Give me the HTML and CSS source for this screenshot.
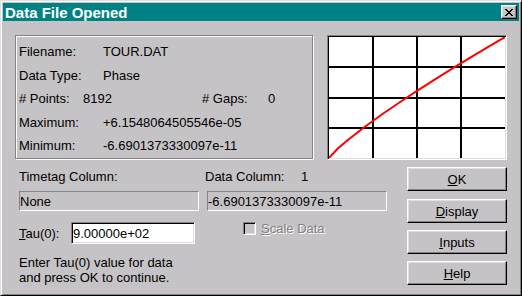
FILE: index.html
```html
<html>

<head>
	<link rel="stylesheet" href="styles.css">
</head>

<body>
	<div class="window">
		<div class="titlebar">
			<span class="title">Data File Opened</span>
			<span class="close-btn">
				<svg width="8" height="7" viewBox="0 0 8 7">
					<path d="M0 0h2v1H0z M6 0h2v1H6z M1 1h2v1H1z M5 1h2v1H5z M2 2h4v1H2z M3 3h2v1H3z M2 4h4v1H2z M1 5h2v1H1z M5 5h2v1H5z M0 6h2v1H0z M6 6h2v1H6z" fill="#000"/>
				</svg>
			</span>
		</div>
		<div class="main">
			<div class="top">
				<div class="info">
					<div><span class="lbl">Filename:</span>TOUR.DAT</div>
					<div><span class="lbl">Data Type:</span>Phase</div>
					<div><span class="lbl-short">#&nbsp;Points:</span><span class="points">8192</span><span class="gaps">#&nbsp;Gaps:</span>0</div>
					<div><span class="lbl">Maximum:</span>+6.1548064505546e-05</div>
					<div><span class="lbl">Minimum:</span>-6.6901373330097e-11</div>
				</div>
				<div class="graph">
					<svg width="176" height="121" viewBox="0 0 176 121" shape-rendering="crispEdges">
						<rect x="43" y="0" width="2" height="121" fill="#000"/>
						<rect x="87" y="0" width="2" height="121" fill="#000"/>
						<rect x="131" y="0" width="2" height="121" fill="#000"/>
						<rect x="0" y="29" width="176" height="2" fill="#000"/>
						<rect x="0" y="60" width="176" height="2" fill="#000"/>
						<rect x="0" y="90" width="176" height="2" fill="#000"/>
						<polyline fill="none" stroke="#ff0000" stroke-width="2" shape-rendering="auto"
							points="0,121 8.8,111.5 17.6,103.9 35.2,90.2 52.8,77.5 70.4,65.5 88,53.9 105.6,42.6 123.2,31.6 140.8,20.9 158.4,10.4 176,0"/>
					</svg>
				</div>
			</div>
			<div class="bottom">
				<div class="left">
					<div class="col-labels">
						<span class="col1">Timetag Column:</span>
						<span class="col2">Data Column:</span><span>1</span>
					</div>
					<div class="boxes">
						<div class="field">None</div>
						<div class="field">-6.6901373330097e-11</div>
					</div>
					<div class="tau-row">
						<label class="tau-label"><u>T</u>au(0):</label>
						<input class="tau-input" type="text" value="9.00000e+02">
						<span class="check-group">
							<span class="check"></span>
							<span class="disabled"><u>S</u>cale Data</span>
						</span>
					</div>
					<p class="help">Enter Tau(0) value for data<br>and press OK to continue.</p>
				</div>
				<div class="buttons">
					<button class="btn"><u>O</u>K</button>
					<button class="btn"><u>D</u>isplay</button>
					<button class="btn"><u>I</u>nputs</button>
					<button class="btn"><u>H</u>elp</button>
				</div>
			</div>
		</div>
	</div>
</body>

</html>
```

FILE: styles.css
```css
body {
	margin: 0;
	font-family: "Liberation Sans", Arial, sans-serif;
	font-size: 13px;
	color: #000;
}

.window {
	width: 522px;
	height: 296px;
	box-sizing: border-box;
	background-color: #c6c3c6;
	border: 1px solid;
	border-color: #dfdfdf #000 #000 #dfdfdf;
	box-shadow: inset 1px 1px #fff, inset -1px -1px #848284;
	padding: 2px;
	overflow: hidden;
}

.titlebar {
	height: 18px;
	background-color: #008284;
	display: flex;
	justify-content: space-between;
	padding: 0 2px 0 2px;
}

.title {
	color: #fff;
	font-weight: bold;
	font-size: 15px;
	line-height: 17px;
	padding-top: 1px;
}

.close-btn {
	align-self: center;
	width: 16px;
	height: 14px;
	box-sizing: border-box;
	background-color: #c6c3c6;
	border: 1px solid;
	border-color: #fff #000 #000 #fff;
	box-shadow: inset -1px -1px #848284, inset 1px 1px #dfdfdf;
	display: flex;
	align-items: center;
	justify-content: center;
}

.close-btn svg {
	display: block;
}

.main {
	padding: 14px 12px 0 12px;
}

.top {
	display: flex;
	align-items: flex-start;
	gap: 14px;
}

.info {
	width: 298px;
	height: 124px;
	box-sizing: border-box;
	border: 1px solid #848284;
	box-shadow: inset 1px 1px #fff, 1px 1px #fff;
	padding: 4px 3px 0 3px;
	line-height: 23.5px;
	white-space: nowrap;
}

.lbl {
	display: inline-block;
	width: 84px;
}

.lbl-short {
	display: inline-block;
	width: 64px;
}

.points {
	display: inline-block;
	width: 119px;
}

.gaps {
	display: inline-block;
	width: 66px;
}

.graph {
	background-color: #fff;
	border: 1px solid;
	border-color: #848284 #fff #fff #848284;
	box-shadow: inset 1px 1px #000, inset -1px -1px #dfdfdf;
	padding: 1px;
}

.graph svg {
	display: block;
}

.bottom {
	display: flex;
	padding-left: 4px;
}

.left {
	width: 388px;
}

.col-labels {
	margin-top: 9px;
	line-height: 15px;
	display: flex;
}

.col1 {
	width: 186px;
}

.col2 {
	width: 96px;
}

.boxes {
	margin-top: 7px;
	display: flex;
	gap: 8px;
}

.field {
	width: 180px;
	height: 20px;
	box-sizing: border-box;
	border: 1px solid;
	border-color: #848284 #fff #fff #848284;
	padding-top: 1px;
	line-height: 17px;
	white-space: nowrap;
}

.tau-row {
	margin-top: 11px;
	height: 22px;
	display: flex;
	align-items: center;
}

.tau-label {
	width: 52px;
	line-height: 15px;
}

.tau-input {
	width: 124px;
	height: 22px;
	box-sizing: border-box;
	margin: 0;
	padding: 0 1px;
	font-family: inherit;
	font-size: 13px;
	color: #000;
	background-color: #fff;
	border: 1px solid;
	border-color: #848284 #fff #fff #848284;
	box-shadow: inset 1px 1px #000, inset -1px -1px #dfdfdf;
	outline: none;
}

.check-group {
	margin-left: 48px;
	align-self: flex-start;
	margin-top: -1px;
	display: flex;
	align-items: center;
	line-height: 15px;
	gap: 5px;
}

.check {
	width: 13px;
	height: 13px;
	box-sizing: border-box;
	border: 1px solid;
	border-color: #848284 #fff #fff #848284;
	box-shadow: inset 1px 1px #000, inset -1px -1px #dfdfdf;
	background-color: #c6c3c6;
}

.disabled {
	color: #848284;
	text-shadow: 1px 1px #fff;
}

.help {
	margin: 11px 0 0 0;
	line-height: 15px;
}

.buttons {
	margin-top: 7px;
	display: flex;
	flex-direction: column;
}

.btn {
	width: 100px;
	height: 24px;
	box-sizing: border-box;
	margin: 0 0 7px 0;
	padding: 0;
	font-family: inherit;
	font-size: 13px;
	color: #000;
	background-color: #c6c3c6;
	border: 1px solid;
	border-color: #fff #000 #000 #fff;
	box-shadow: inset -1px -1px #848284, inset 1px 1px #dfdfdf;
	line-height: 15px;
}

.btn:first-child {
	margin-bottom: 8px;
}
```
